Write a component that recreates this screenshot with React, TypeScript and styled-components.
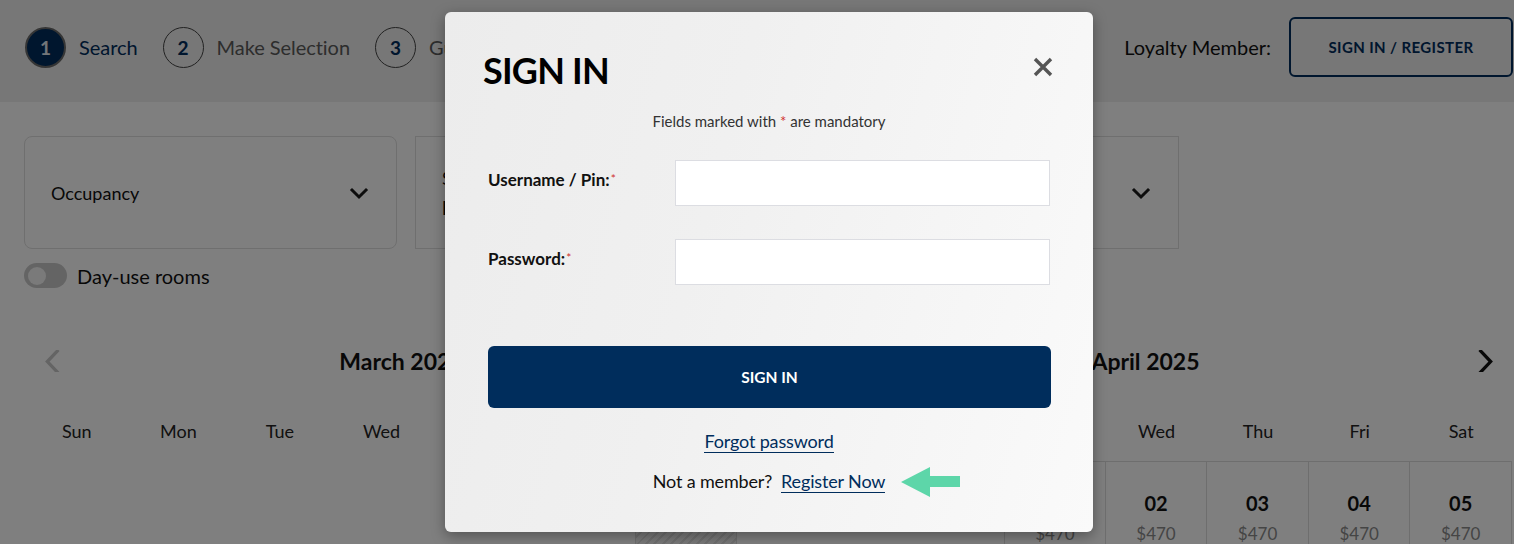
import React from "react";
import styled, { createGlobalStyle, css } from "styled-components";

const NAVY = "#002d5c";

const GlobalStyle = createGlobalStyle`
  html, body {
    margin: 0;
    padding: 0;
    background: #ffffff;
    overflow: hidden;
  }
  body {
    font-family: Lato, "Open Sans", "Liberation Sans", sans-serif;
    color: #222;
  }
  * { box-sizing: border-box; }
`;

const Page = styled.div`
  width: 1514px;
  height: 544px;
  position: relative;
  overflow: hidden;
  background: #fff;
`;

/* ---------- Header ---------- */
const Header = styled.header`
  height: 102px;
  background: #eeeeee;
  display: flex;
  align-items: flex-start;
  padding: 17px 1px 0 25px;
`;

const Steps = styled.ol`
  list-style: none;
  margin: 0;
  padding: 0;
  display: flex;
  align-items: center;
  gap: 25px;
  height: 60px;
`;

const Step = styled.li`
  display: flex;
  align-items: center;
  gap: 13px;
`;

const StepCircle = styled.span<{ $active?: boolean }>`
  width: 41px;
  height: 41px;
  border-radius: 50%;
  display: flex;
  align-items: center;
  justify-content: center;
  font-size: 19px;
  font-weight: 700;
  ${(p) =>
    p.$active
      ? css`
          background: ${NAVY};
          border: 2px solid #6b6b6b;
          color: #e6ecf2;
        `
      : css`
          background: transparent;
          border: 1.5px solid #444;
          color: ${NAVY};
        `}
`;

const StepLabel = styled.span<{ $active?: boolean }>`
  font-size: 20px;
  letter-spacing: -0.05px;
  color: ${(p) => (p.$active ? NAVY : "#5a5a5a")};
`;

const Loyalty = styled.div`
  margin-left: auto;
  display: flex;
  align-items: center;
  gap: 18px;
`;

const LoyaltyLabel = styled.span`
  font-size: 20px;
  color: #111;
`;

const OutlineButton = styled.button`
  width: 224px;
  height: 60px;
  border: 2px solid ${NAVY};
  border-radius: 6px;
  background: transparent;
  color: ${NAVY};
  font-family: inherit;
  font-size: 15px;
  font-weight: 700;
  letter-spacing: 0.4px;
`;

/* ---------- Search area ---------- */
const SearchArea = styled.section`
  padding: 34px 24px 0 24px;
`;

const Cards = styled.div`
  display: grid;
  grid-template-columns: repeat(3, 373px);
  gap: 18px;
`;

const Card = styled.div<{ $rounded?: boolean }>`
  height: 113px;
  border: 1px solid #dedede;
  border-radius: ${(p) => (p.$rounded ? "8px" : "0")};
  display: flex;
  align-items: center;
  padding: 0 27px 0 26px;
`;

const CardText = styled.div`
  flex: 1;
  display: flex;
  flex-direction: column;
  gap: 8px;
`;

const CardLabel = styled.span`
  font-size: 18px;
  color: #111;
`;

const CardValue = styled.span`
  font-size: 18px;
  font-weight: 700;
  color: #111;
`;

const Chevron = ({ dir = "down", color = "#1b1b1b", size = 20 }: { dir?: "down" | "left" | "right"; color?: string; size?: number }) => {
  const d =
    dir === "down" ? "M3 7 L10 14 L17 7" : dir === "left" ? "M17.5 1 L8.5 10.5 L17.5 20" : "M2.5 1 L11.5 10.5 L2.5 20";
  return (
    <svg width={size} height={size} viewBox="0 0 20 20" fill="none">
      <path d={d} stroke={color} strokeWidth={3} strokeLinecap="square" strokeLinejoin="miter" />
    </svg>
  );
};

const ToggleRow = styled.label`
  display: flex;
  align-items: center;
  gap: 10px;
  margin-top: 14px;
`;

const Switch = styled.span`
  width: 43px;
  height: 25px;
  border-radius: 13px;
  background: #c9c9c9;
  display: flex;
  align-items: center;
  padding: 0 4px;
`;

const Knob = styled.span`
  width: 18px;
  height: 18px;
  border-radius: 50%;
  background: #f4f4f4;
`;

const ToggleText = styled.span`
  font-size: 20px;
  color: #111;
`;

/* ---------- Calendar ---------- */
const Calendar = styled.section`
  display: grid;
  grid-template-columns: 1fr 1fr;
  gap: 64px;
  padding: 51px 2px 0 26px;
`;

const Month = styled.div`
  display: flex;
  flex-direction: column;
`;

const MonthHeader = styled.div`
  height: 44px;
  display: flex;
  align-items: center;
`;

const NavSlot = styled.span<{ $side: "left" | "right" }>`
  width: 34px;
  height: 22px;
  display: flex;
  justify-content: ${(p) => (p.$side === "left" ? "flex-end" : "flex-start")};
`;

const MonthTitle = styled.h2<{ $padLeft: number }>`
  flex: 1;
  margin: 0;
  padding-left: ${(p) => p.$padLeft}px;
  text-align: center;
  font-size: 23px;
  font-weight: 700;
  color: #111;
`;

const WeekHeader = styled.div`
  display: grid;
  grid-template-columns: repeat(7, 1fr);
  height: 40px;
  margin-top: 28px;
  margin-bottom: 10px;
  align-items: center;
`;

const WeekDay = styled.span`
  text-align: center;
  font-size: 18px;
  color: #222;
`;

const Week = styled.div`
  display: grid;
  grid-template-columns: repeat(7, 1fr);
`;

const DayCell = styled.div<{ $empty?: boolean; $disabled?: boolean }>`
  height: 100px;
  display: flex;
  flex-direction: column;
  align-items: center;
  padding-top: 30px;
  gap: 10px;
  ${(p) =>
    !p.$empty &&
    css`
      border-top: 1px solid #dcdcdc;
      border-right: 1px solid #dcdcdc;
      &.first {
        border-left: 1px solid #dcdcdc;
      }
    `}
  ${(p) =>
    p.$disabled &&
    css`
      background: repeating-linear-gradient(
        135deg,
        #f2f2f2 0px,
        #f2f2f2 4px,
        #dedede 4px,
        #dedede 6px
      );
    `}
`;

const DayNum = styled.span`
  font-size: 20px;
  font-weight: 700;
  line-height: 22px;
  color: #111;
`;

const Price = styled.span`
  font-size: 17px;
  line-height: 20px;
  color: #8a8a8a;
`;

/* ---------- Modal ---------- */
const Overlay = styled.div`
  position: absolute;
  inset: 0;
  background: rgba(0, 0, 0, 0.5);
`;

const Dialog = styled.div`
  position: absolute;
  left: 445px;
  top: 12px;
  width: 648px;
  height: 520px;
  border-radius: 6px;
  background: linear-gradient(105deg, #ececec 0%, #f0f0f0 40%, #fafafa 100%);
  box-shadow: 0 4px 14px rgba(0, 0, 0, 0.35);
  padding: 37px 40px 0 0;
  display: flex;
  flex-direction: column;
`;

const DialogHeader = styled.div`
  display: flex;
  align-items: flex-start;
  padding-left: 38px;
`;

const DialogTitle = styled.h1`
  flex: 1;
  margin: 0;
  font-size: 36px;
  line-height: 43px;
  font-weight: 700;
  color: #000;
  letter-spacing: -0.8px;
`;

const CloseButton = styled.button`
  border: none;
  background: transparent;
  padding: 0;
  margin-top: 8px;
  width: 20px;
  height: 20px;
  display: flex;
`;

const Mandatory = styled.p`
  margin: 20px 0 0 40px;
  text-align: center;
  font-size: 15px;
  line-height: 18px;
  color: #333;
`;

const Req = styled.span`
  color: #d0312d;
`;

const Form = styled.form`
  padding-left: 43px;
  display: flex;
  flex-direction: column;
`;

const FieldRow = styled.div<{ $first?: boolean }>`
  display: grid;
  grid-template-columns: 187px 375px;
  align-items: center;
  margin-top: ${(p) => (p.$first ? "30px" : "33px")};
`;

const Label = styled.label`
  font-size: 17px;
  line-height: 20px;
  font-weight: 700;
  color: #111;
  padding-bottom: 4px;
`;

const LabelReq = styled.span`
  color: #d0312d;
  font-size: 12px;
  font-weight: 400;
  position: relative;
  top: -3px;
  margin-left: 1px;
`;

const Input = styled.input`
  height: 46px;
  border: 1px solid #dcdde2;
  background: #fff;
  font-family: inherit;
  font-size: 16px;
  padding: 0 12px;
  outline: none;
`;

const PrimaryButton = styled.button`
  margin-top: 61px;
  width: 563px;
  height: 62px;
  border: none;
  border-radius: 6px;
  background: ${NAVY};
  color: #fff;
  font-family: inherit;
  font-size: 15.5px;
  font-weight: 700;
`;

const LinkLine = styled.div<{ $gap: number }>`
  margin-top: ${(p) => p.$gap}px;
  padding-right: 3px;
  text-align: center;
  font-size: 18px;
  line-height: 22px;
  color: #111;
  letter-spacing: -0.15px;
`;

const TextLink = styled.a`
  position: relative;
  color: ${NAVY};
  text-decoration: none;
  border-bottom: 1.5px solid ${NAVY};
`;

const Arrow = styled.svg`
  position: absolute;
  left: calc(100% + 16px);
  top: -3px;
`;

const weekdays = ["Sun", "Mon", "Tue", "Wed", "Thu", "Fri", "Sat"];

type Day = { n?: string; disabled?: boolean; first?: boolean };

const marchWeeks: Day[][] = [
  [{}, {}, {}, {}, {}, {}, { n: "01", disabled: true, first: true }],
  [
    { n: "02", disabled: true, first: true },
    { n: "03", disabled: true },
    { n: "04", disabled: true },
    { n: "05", disabled: true },
    { n: "06", disabled: true },
    { n: "07", disabled: true },
    { n: "08", disabled: true },
  ],
];

const aprilWeeks: Day[][] = [
  [{}, {}, { n: "01", first: true }, { n: "02" }, { n: "03" }, { n: "04" }, { n: "05" }],
  [
    { n: "06", first: true },
    { n: "07" },
    { n: "08" },
    { n: "09" },
    { n: "10" },
    { n: "11" },
    { n: "12" },
  ],
];

const MonthView = ({ title, weeks, nav }: { title: string; weeks: Day[][]; nav: "left" | "right" }) => (
  <Month>
    <MonthHeader>
      {nav === "left" && (
        <NavSlot $side="left">
          <Chevron dir="left" color="#c8c8c8" size={22} />
        </NavSlot>
      )}
      <MonthTitle $padLeft={nav === "left" ? 6 : 12}>{title}</MonthTitle>
      {nav === "right" && (
        <NavSlot $side="right">
          <Chevron dir="right" color="#111" size={22} />
        </NavSlot>
      )}
    </MonthHeader>
    <WeekHeader>
      {weekdays.map((d) => (
        <WeekDay key={d}>{d}</WeekDay>
      ))}
    </WeekHeader>
    {weeks.map((w, i) => (
      <Week key={i}>
        {w.map((d, j) =>
          d.n ? (
            <DayCell key={j} $disabled={d.disabled} className={d.first ? "first" : undefined}>
              {!d.disabled && (
                <>
                  <DayNum>{d.n}</DayNum>
                  <Price>$470</Price>
                </>
              )}
            </DayCell>
          ) : (
            <DayCell key={j} $empty />
          )
        )}
      </Week>
    ))}
  </Month>
);

export default function App() {
  return (
    <Page>
      <GlobalStyle />
      <Header>
        <Steps>
          <Step>
            <StepCircle $active>1</StepCircle>
            <StepLabel $active>Search</StepLabel>
          </Step>
          <Step>
            <StepCircle>2</StepCircle>
            <StepLabel>Make Selection</StepLabel>
          </Step>
          <Step>
            <StepCircle>3</StepCircle>
            <StepLabel>Guest Details</StepLabel>
          </Step>
        </Steps>
        <Loyalty>
          <LoyaltyLabel>Loyalty Member:</LoyaltyLabel>
          <OutlineButton>SIGN IN / REGISTER</OutlineButton>
        </Loyalty>
      </Header>

      <SearchArea>
        <Cards>
          <Card $rounded>
            <CardText>
              <CardLabel>Occupancy</CardLabel>
            </CardText>
            <Chevron />
          </Card>
          <Card>
            <CardText>
              <CardLabel>Select Dates</CardLabel>
              <CardValue>Mon, Mar 31 - Tue, Apr 01</CardValue>
            </CardText>
          </Card>
          <Card>
            <CardText>
              <CardLabel>Rate Type</CardLabel>
            </CardText>
            <Chevron />
          </Card>
        </Cards>
        <ToggleRow>
          <Switch>
            <Knob />
          </Switch>
          <ToggleText>Day-use rooms</ToggleText>
        </ToggleRow>
      </SearchArea>

      <Calendar>
        <MonthView title="March 2025" weeks={marchWeeks} nav="left" />
        <MonthView title="April 2025" weeks={aprilWeeks} nav="right" />
      </Calendar>

      <Overlay />

      <Dialog role="dialog" aria-label="Sign in">
        <DialogHeader>
          <DialogTitle>SIGN IN</DialogTitle>
          <CloseButton aria-label="Close">
            <svg width="20" height="20" viewBox="0 0 20 20">
              <path d="M2 2 L18 18 M18 2 L2 18" stroke="#555" strokeWidth="3.4" strokeLinecap="butt" />
            </svg>
          </CloseButton>
        </DialogHeader>
        <Mandatory>
          Fields marked with <Req>*</Req> are mandatory
        </Mandatory>
        <Form onSubmit={(e) => e.preventDefault()}>
          <FieldRow $first>
            <Label>
              Username / Pin:<LabelReq>*</LabelReq>
            </Label>
            <Input type="text" />
          </FieldRow>
          <FieldRow>
            <Label>
              Password:<LabelReq>*</LabelReq>
            </Label>
            <Input type="password" />
          </FieldRow>
          <PrimaryButton type="submit">SIGN IN</PrimaryButton>
          <LinkLine $gap={22}>
            <TextLink href="#">Forgot password</TextLink>
          </LinkLine>
          <LinkLine $gap={18}>
            Not a member?&nbsp;{" "}
            <TextLink href="#">
              Register Now
              <Arrow width="59" height="30" viewBox="0 0 59 30">
                <polygon points="0,15 29,0 29,9 59,9 59,20 29,20 29,30" fill="#5dd6a9" />
              </Arrow>
            </TextLink>
          </LinkLine>
        </Form>
      </Dialog>
    </Page>
  );
}
